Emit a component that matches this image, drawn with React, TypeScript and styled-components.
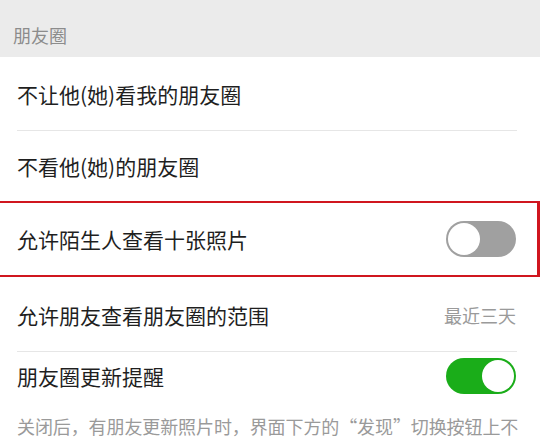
import styled, { createGlobalStyle } from "styled-components";

const GlobalStyle = createGlobalStyle`
  html, body {
    margin: 0;
    padding: 0;
    background: #fff;
    overflow: hidden;
  }
  body {
    font-family: "Noto Sans CJK SC", "Noto Sans", sans-serif;
  }
`;

const Page = styled.div`
  width: 540px;
  height: 440px;
  background: #fff;
`;

const GroupHeader = styled.div`
  height: 57px;
  box-sizing: border-box;
  padding: 22px 0 0 13px;
  background: #ebebeb;
  color: #8c8c8c;
  font-size: 18px;
  line-height: 26px;
`;

const Row = styled.div<{ $height: number; $divider?: boolean; $marked?: boolean }>`
  position: relative;
  height: ${({ $height }) => $height}px;
  box-sizing: border-box;
  display: flex;
  align-items: center;
  justify-content: space-between;
  padding: 0 23px 0 17px;
  border-top: ${({ $marked }) => ($marked ? "2px solid #d0161f" : "none")};
  border-bottom: ${({ $marked }) => ($marked ? "2px solid #d0161f" : "none")};
  border-right: ${({ $marked }) => ($marked ? "3px solid #d0161f" : "none")};
  padding-right: ${({ $marked }) => ($marked ? 21 : 24)}px;

  &::after {
    content: "";
    display: ${({ $divider }) => ($divider ? "block" : "none")};
    position: absolute;
    left: 17px;
    right: 23px;
    bottom: 0;
    height: 1px;
    background: #e6e6e6;
  }
`;

const Label = styled.span`
  color: #1f1f1f;
  font-size: 21px;
  line-height: 30px;
`;

const Value = styled.span`
  color: #9a9a9a;
  font-size: 18px;
  line-height: 26px;
`;

const Switch = styled.div<{ $on?: boolean }>`
  width: 70px;
  height: 36px;
  border-radius: 18px;
  box-sizing: border-box;
  padding: 2px;
  display: flex;
  justify-content: ${({ $on }) => ($on ? "flex-end" : "flex-start")};
  background: ${({ $on }) => ($on ? "#1aad19" : "#a0a0a0")};
`;

const Knob = styled.div`
  width: 32px;
  height: 32px;
  border-radius: 50%;
  background: #fff;
`;

const Note = styled.p`
  margin: 0;
  padding: 13px 0 0 17px;
  color: #9a9a9a;
  font-size: 18px;
  line-height: 26px;
  letter-spacing: -0.1px;
  white-space: nowrap;
`;

export default function App() {
  return (
    <Page>
      <GlobalStyle />
      <GroupHeader>朋友圈</GroupHeader>
      <Row $height={74} $divider>
        <Label>不让他(她)看我的朋友圈</Label>
      </Row>
      <Row $height={70}>
        <Label>不看他(她)的朋友圈</Label>
      </Row>
      <Row $height={76} $marked>
        <Label>允许陌生人查看十张照片</Label>
        <Switch>
          <Knob />
        </Switch>
      </Row>
      <Row $height={75} $divider>
        <Label>允许朋友查看朋友圈的范围</Label>
        <Value>最近三天</Value>
      </Row>
      <Row $height={48}>
        <Label>朋友圈更新提醒</Label>
        <Switch $on>
          <Knob />
        </Switch>
      </Row>
      <Note>关闭后，有朋友更新照片时，界面下方的“发现”切换按钮上不</Note>
    </Page>
  );
}
